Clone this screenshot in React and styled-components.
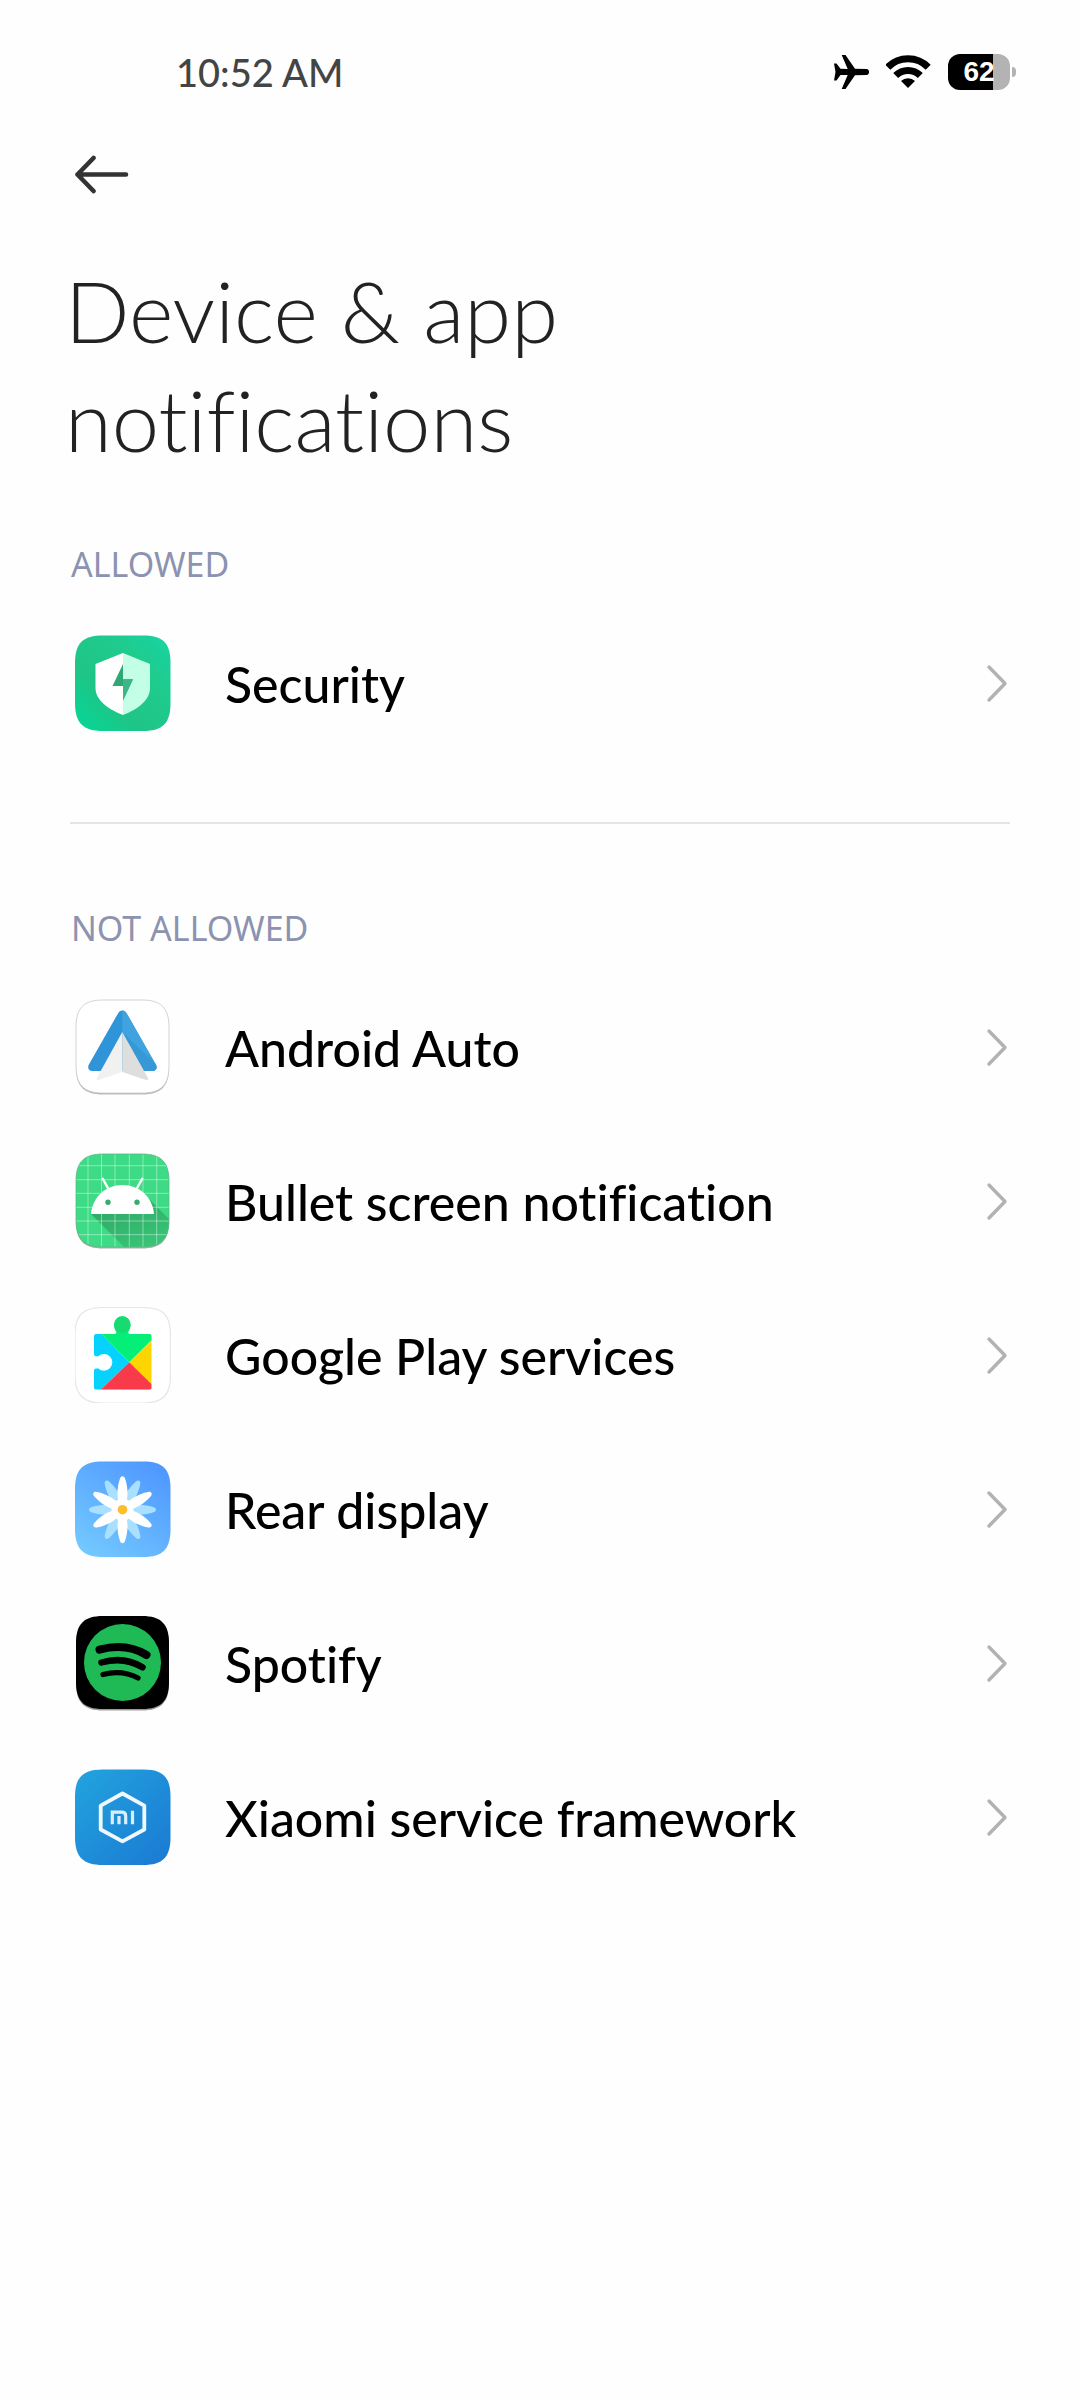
import React from 'react'
import styled, { createGlobalStyle } from 'styled-components'

const App = () => {
    return (
        <Page>
            <GlobalStyle />
            <StatusBar>
                <Clock>10:52 AM</Clock>
                <StatusIcons>
                    <PlaneIcon />
                    <WifiIcon />
                    <Battery>
                        <BatteryBody>62</BatteryBody>
                        <BatteryTip />
                    </Battery>
                </StatusIcons>
            </StatusBar>

            <TopBar>
                <BackButton type="button" aria-label="Back">
                    <svg width="56" height="40" viewBox="0 0 56 40" fill="none" stroke="#333" strokeWidth="4.6" strokeLinecap="round" strokeLinejoin="round">
                        <path d="M53 20.5H4.5M20.5 4L4.5 20.5L20.5 37" />
                    </svg>
                </BackButton>
            </TopBar>

            <Title>Device &amp; app notifications</Title>

            <Section>
                <SectionLabel>ALLOWED</SectionLabel>
                <List>
                    {allowed.map((app) => <AppItem key={app.name} app={app} />)}
                </List>
            </Section>

            <Divider />

            <Section>
                <SectionLabel>NOT ALLOWED</SectionLabel>
                <List>
                    {notAllowed.map((app) => <AppItem key={app.name} app={app} />)}
                </List>
            </Section>
        </Page>
    )
}

export default App

const AppItem = ({ app }) => {
    const Icon = app.icon
    return (
        <li>
            <Row href="#">
                <AppIcon viewBox="0 0 96 96" aria-hidden="true"><Icon /></AppIcon>
                <AppName>{app.name}</AppName>
                <Chevron viewBox="0 0 24 40" aria-hidden="true">
                    <path d="M3 4L19 20.5L3 37" />
                </Chevron>
            </Row>
        </li>
    )
}

// rounded squares shared by the app icons
const SQUIRCLE = 'M28 0.5H68C88 0.5 95.5 8 95.5 28V68C95.5 88 88 96 68 96H28C8 96 0 88 0 68V28C0 8 8 0.5 28 0.5Z'
const SMALL = 'M28 1H67C86 1 94 9 94 28V67C94 86 86 94 67 94H28C9 94 1 86 1 67V28C1 9 9 1 28 1Z'

const SecurityIcon = () => (
    <>
        <defs>
            <linearGradient id="sec" x1="0" y1="1" x2="1" y2="0">
                <stop offset="0" stopColor="#02d899" />
                <stop offset="0.35" stopColor="#1fc586" />
                <stop offset="0.7" stopColor="#1fcb8f" />
                <stop offset="1" stopColor="#17d6a3" />
            </linearGradient>
        </defs>
        <path d={SQUIRCLE} fill="url(#sec)" />
        <path d="M48 18L20.5 29V53C20.5 66 35 75 48 80Z" fill="#fff" />
        <path d="M48 18L75 29V53C75 66 61 75 48 80Z" fill="#c3ffe6" />
        <path d="M48 29V44.3H58L48 65.5V51H37.5Z" fill="#2fa878" />
        <path d="M48 44.3H58L48 65.5Z" fill="#3cb687" />
    </>
)

const AutoIcon = () => (
    <>
        <path d={SMALL} transform="translate(0 1.5)" fill="#b9b9b9" />
        <path d={SMALL} fill="#fff" stroke="#c8c8c8" strokeWidth="0.8" />
        <path d="M47.3 11.5C45.3 11.5 44 12.6 43 14.4L13.9 65.6C12 69 14 72 17.5 72H77.2C80.8 72 82.7 69 80.8 65.6L51.7 14.4C50.6 12.6 49.4 11.5 47.3 11.5Z" fill="#3095d8" />
        <path d="M47.3 11.5C49.4 11.5 50.6 12.6 51.7 14.4L80.8 65.6C82.7 69 80.8 72 77.2 72H47.3Z" fill="#3fa3e0" />
        <path d="M47.3 33L80.5 65C82.7 69 80.8 72 77.2 72H66Z" fill="#3698d4" />
        <path d="M47.3 33L21.8 79C21.3 80.6 22.2 81.4 23.8 81L47.3 73Z" fill="#f1f1f1" />
        <path d="M47.3 33L73 79C73.5 80.6 72.6 81.4 71 81L47.3 73Z" fill="#dedede" />
    </>
)

const BulletIcon = () => (
    <>
        <defs>
            <clipPath id="bulletClip"><path d={SMALL} /></clipPath>
            <linearGradient id="bulletShade" x1="0.2" y1="0" x2="0.8" y2="1">
                <stop offset="0" stopColor="#2fa566" />
                <stop offset="1" stopColor="#38c777" />
            </linearGradient>
        </defs>
        <path d={SMALL} transform="translate(0 1.5)" fill="#a3aea8" />
        <path d={SMALL} fill="#3ddb85" />
        <g clipPath="url(#bulletClip)">
            <path d="M16 61L50 95H96V68L74 46Z" fill="url(#bulletShade)" />
            <path d="M13 0V96M26.5 0V96M40 0V96M54.3 0V96M68 0V96M81.7 0V96M0 12.7H96M0 26.7H96M0 40.3H96M0 54.3H96M0 68H96M0 81.7H96" stroke="#fff" strokeOpacity="0.42" strokeWidth="1" />
        </g>
        <path d={SMALL} fill="none" stroke="#5fb586" strokeWidth="0.8" />
        <path d="M16 61C17.5 44 30.5 32 47.5 32S77.5 44 79 61Z" fill="#fff" />
        <path d="M27.7 25.7L34 37M67.3 25.7L61 37" stroke="#fff" strokeWidth="2.4" strokeLinecap="round" />
        <circle cx="33" cy="49.3" r="2.7" fill="#37ad6c" />
        <circle cx="62" cy="49.3" r="2.7" fill="#37ad6c" />
    </>
)

const PlayIcon = () => (
    <>
        <defs>
            <clipPath id="playClip">
                <path d="M21 27H39.5C41 27 41.8 26 41 24.5C39.8 22.5 39 20 39 17.5A8.3 8.3 0 0 1 55.6 17.5C55.6 20 54.8 22.5 53.6 24.5C52.8 26 53.6 27 55 27H74.7Q76.7 27 76.7 29V80.7Q76.7 82.7 74.7 82.7H21Q19 82.7 19 80.7V63.5Q19 61.5 21 61.5H23.5C25 63 27 63.7 29 63.7A8.3 8.3 0 0 0 29 47C27 47 25 47.8 23.5 49.2H21Q19 49.2 19 47.2V29Q19 27 21 27Z" />
            </clipPath>
        </defs>
        <path d={SQUIRCLE} fill="#fff" stroke="#e6e6e6" strokeWidth="1.2" />
        <g clipPath="url(#playClip)">
            <path d="M19 27H26.7L54.3 55.3L25.7 82.7H19Z" fill="#05d3fe" />
            <path d="M26.7 27L39 8H56L76.7 27V33L54.3 55.3Z" fill="#05ef78" />
            <circle cx="47.3" cy="17.5" r="8.5" fill="#16db70" />
            <path d="M76.7 33V77.3L54.3 55.3Z" fill="#fed402" />
            <path d="M25.7 82.7L54.3 55.3L76.7 77.3V82.7Z" fill="#f93a4a" />
        </g>
    </>
)

const PETAL = 'M47.5 48.7C41 41 41.5 27 45 17.5C46 14.5 49 14.5 50 17.5C53.5 27 54 41 47.5 48.7Z'

const RearIcon = () => (
    <>
        <defs>
            <linearGradient id="rear" x1="0.1" y1="1" x2="0.8" y2="0">
                <stop offset="0" stopColor="#74caff" />
                <stop offset="1" stopColor="#4f98ff" />
            </linearGradient>
        </defs>
        <path d={SQUIRCLE} fill="url(#rear)" />
        {[30, 90, 150, 210, 270, 330].map((a) => (
            <path key={a} d={PETAL} fill="#a9e0ff" transform={`rotate(${a} 47.5 48.7)`} />
        ))}
        {[0, 60, 120, 180, 240, 300].map((a) => (
            <path key={a} d={PETAL} fill="#fff" transform={`rotate(${a} 47.5 48.7)`} />
        ))}
        <circle cx="47.5" cy="48.7" r="11" fill="#fff" />
        <circle cx="47.5" cy="48.7" r="4.8" fill="#fdbd2c" />
    </>
)

const SpotifyIcon = () => (
    <>
        <path d={SMALL} transform="translate(0 1.5)" fill="#9c9c9c" />
        <path d={SMALL} fill="#000" />
        <circle cx="47.5" cy="47.5" r="38.5" fill="#1fba55" />
        <g fill="none" stroke="#000" strokeLinecap="round">
            <path d="M24.5 34.7Q51 27.5 71.5 40" strokeWidth="8" />
            <path d="M26.5 47.5Q49 41 67.5 52.3" strokeWidth="6.5" />
            <path d="M28 59.5Q47 54.5 63 63" strokeWidth="5.2" />
        </g>
    </>
)

const XiaomiIcon = () => (
    <>
        <defs>
            <linearGradient id="xm" x1="0" y1="0" x2="1" y2="1">
                <stop offset="0" stopColor="#22a4de" />
                <stop offset="1" stopColor="#1b79d3" />
            </linearGradient>
        </defs>
        <path d={SQUIRCLE} fill="url(#xm)" />
        <path d="M47.5 24.5L69.3 36.7V60.5L47.5 72.3L25.7 60.5V36.7Z" fill="none" stroke="#eef8ff" strokeWidth="3.8" strokeLinejoin="round" />
        <path d="M37.3 55.3V43.2H46.5Q50.7 43.2 50.7 47V55.3M44 47V55.3M57.5 41.7V55.3" fill="none" stroke="#d9efff" strokeWidth="3.2" />
    </>
)

const PlaneIcon = () => (
    <svg width="36" height="36" viewBox="0 0 36 36" aria-hidden="true">
        <path d="M0 9.5H2.5L6.5 14.8L13.7 15L7.7 1H11.5L21 14.8L32.5 15C36 15.2 36 20.8 32.5 21L21 21.2L11.5 35H7.7L13.7 21H6.5L2.5 26.5H0L1.5 18Z" fill="#000" />
    </svg>
)

const WifiIcon = () => (
    <svg width="46" height="36" viewBox="0 0 46 36" aria-hidden="true">
        <g fill="none" stroke="#000" strokeWidth="7">
            <path d="M1.8 13.2A28.2 28.2 0 0 1 42.2 13.2" />
            <path d="M9.7 21.5A17.4 17.4 0 0 1 34.3 21.5" />
        </g>
        <path d="M22 34L15 27A10 10 0 0 1 29 27Z" fill="#000" />
    </svg>
)

const allowed = [
    { name: 'Security', icon: SecurityIcon },
]

const notAllowed = [
    { name: 'Android Auto', icon: AutoIcon },
    { name: 'Bullet screen notification', icon: BulletIcon },
    { name: 'Google Play services', icon: PlayIcon },
    { name: 'Rear display', icon: RearIcon },
    { name: 'Spotify', icon: SpotifyIcon },
    { name: 'Xiaomi service framework', icon: XiaomiIcon },
]

const GlobalStyle = createGlobalStyle`
* {
    box-sizing: border-box;
}
body {
    margin: 0;
    background-color: #fefefe;
    font-family: Lato, "Noto Sans", sans-serif;
    font-variant-ligatures: none;
}
`
const Page = styled.main`
display: flex;
flex-direction: column;
min-height: 100vh;
background-color: #fefefe;
`
const StatusBar = styled.header`
display: flex;
align-items: center;
justify-content: space-between;
height: 96px;
padding: 48px 64px 0 176px;
margin-bottom: 24px;
`
const Clock = styled.span`
font-size: 38px;
line-height: 48px;
font-weight: 500;
color: #444;
`
const StatusIcons = styled.div`
display: flex;
align-items: center;
gap: 16px;
`
const Battery = styled.div`
display: flex;
align-items: center;
gap: 2px;
`
const BatteryBody = styled.span`
width: 62px;
height: 36px;
border-radius: 12px;
background: linear-gradient(to right, #000 73%, #b3b3b3 73%);
color: white;
font-family: "Liberation Sans", sans-serif;
font-size: 28px;
line-height: 36px;
font-weight: 700;
text-align: center;
`
const BatteryTip = styled.span`
width: 4px;
height: 10px;
border-radius: 0 5px 5px 0;
background-color: #b3b3b3;
`
const TopBar = styled.nav`
display: flex;
align-items: center;
height: 108px;
padding: 0 73px;
`
const BackButton = styled.button`
display: flex;
padding: 0;
border: none;
background: none;
cursor: pointer;
`
const Title = styled.h1`
max-width: 640px;
margin: 28px 0 48px;
padding: 0 65px;
font-size: 85px;
line-height: 109px;
font-weight: 300;
color: #222;
`
const Section = styled.section`
display: flex;
flex-direction: column;
`
const SectionLabel = styled.h2`
margin: 0;
padding: 0 71px;
font-family: "Noto Sans", sans-serif;
font-size: 34px;
line-height: 84px;
font-weight: 400;
color: #8c93b0;
`
const List = styled.ul`
margin: 0;
padding: 0;
list-style: none;
`
const Row = styled.a`
display: flex;
align-items: center;
height: 154px;
padding: 0 70px 0 75px;
color: #000;
text-decoration: none;
`
const AppIcon = styled.svg`
width: 96px;
height: 96px;
flex-shrink: 0;
`
const AppName = styled.span`
flex: 1;
padding: 2px 0 0 54px;
font-size: 50px;
line-height: 60px;
font-weight: 500;
`
const Chevron = styled.svg`
width: 24px;
height: 40px;
flex-shrink: 0;
fill: none;
stroke: #b2b2b2;
stroke-width: 3.4;
stroke-linecap: round;
stroke-linejoin: round;
`
const Divider = styled.hr`
height: 2px;
margin: 62px 70px;
border: none;
background-color: #e4e4e4;
`
